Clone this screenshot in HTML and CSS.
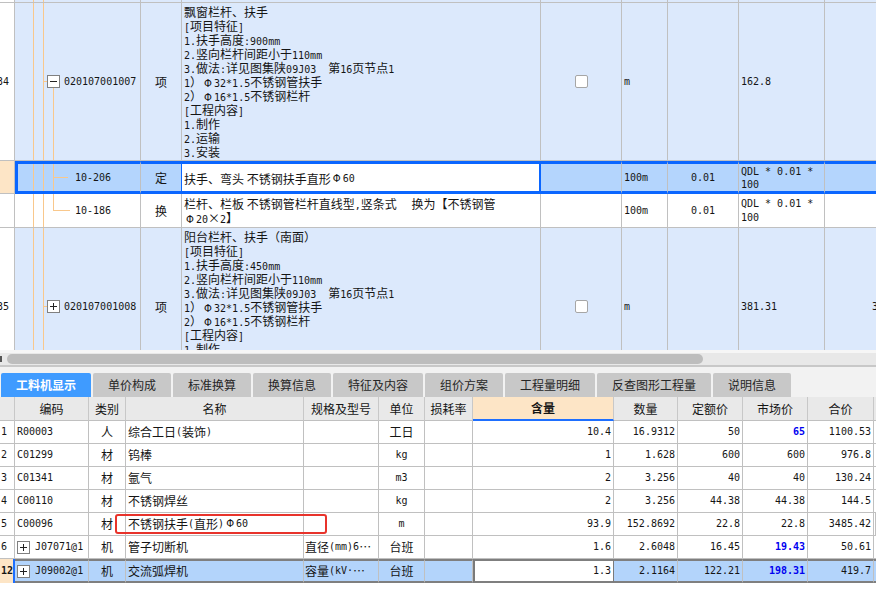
FILE: index.html
```html
<!DOCTYPE html>
<html lang="zh-CN">
<head>
<meta charset="utf-8">
<title>工料机显示</title>
<link rel="stylesheet" href="styles.css">
</head>
<body>
<div class="top">
  <div class="trow blue tail">
    <div class="rn"></div><div class="code"></div><div></div><div></div><div></div><div></div><div></div><div></div><div></div>
  </div>

  <div class="trow blue item">
    <div class="rn m">134</div>
    <div class="code t-open"><svg class="box" width="13" height="13" viewBox="0 0 13 13"><rect x=".5" y=".5" width="12" height="12" fill="#fff" stroke="#808080"/><path d="M3 6.5H10" stroke="#222"/></svg><span class="m">020107001007</span></div>
    <div class="type">项</div>
    <div class="name">飘窗栏杆、扶手<br><span class="m">[</span>项目特征<span class="m">]</span><br><span class="m">1.</span>扶手高度<span class="m">:900mm</span><br><span class="m">2.</span>竖向栏杆间距小于<span class="m">110mm</span><br><span class="m">3.</span>做法<span class="m">:</span>详见图集陕<span class="m">09J03</span>　第<span class="m">16</span>页节点<span class="m">1</span><br><span class="m">1</span>）<span class="phi">Φ</span><span class="m">32*1.5</span>不锈钢管扶手<br><span class="m">2</span>）<span class="phi">Φ</span><span class="m">16*1.5</span>不锈钢栏杆<br><span class="m">[</span>工程内容<span class="m">]</span><br><span class="m">1.</span>制作<br><span class="m">2.</span>运输<br><span class="m">3.</span>安装</div>
    <div class="chk"><span class="cb"></span></div>
    <div class="unit m">m</div>
    <div class="qty m"></div>
    <div class="expr m">162.8</div>
    <div class="lastc"></div>
  </div>

  <div class="trow sel">
    <div class="rn"></div>
    <div class="code t-mid"><span class="m">10-206</span></div>
    <div class="type">定</div>
    <div class="name one">扶手、弯头 不锈钢扶手直形<span class="phi">Φ</span><span class="m">60</span></div>
    <div class="chk"></div>
    <div class="unit m">100m</div>
    <div class="qty m">0.01</div>
    <div class="expr m">QDL * 0.01 *<br>100</div>
    <div class="lastc"></div>
  </div>

  <div class="trow plain">
    <div class="rn"></div>
    <div class="code t-last"><span class="m">10-186</span></div>
    <div class="type">换</div>
    <div class="name">栏杆、栏板 不锈钢管栏杆直线型<span class="m">,</span>竖条式　 换为【不锈钢管<br><span class="phi">Φ</span><span class="m">20</span>×<span class="m">2</span>】</div>
    <div class="chk"></div>
    <div class="unit m">100m</div>
    <div class="qty m">0.01</div>
    <div class="expr m">QDL * 0.01 *<br>100</div>
    <div class="lastc"></div>
  </div>

  <div class="trow blue item">
    <div class="rn m">135</div>
    <div class="code t-closed"><svg class="box" width="13" height="13" viewBox="0 0 13 13"><rect x=".5" y=".5" width="12" height="12" fill="#fff" stroke="#808080"/><path d="M3 6.5H10M6.5 3V10" stroke="#222"/></svg><span class="m">020107001008</span></div>
    <div class="type">项</div>
    <div class="name">阳台栏杆、扶手（南面）<br><span class="m">[</span>项目特征<span class="m">]</span><br><span class="m">1.</span>扶手高度<span class="m">:450mm</span><br><span class="m">2.</span>竖向栏杆间距小于<span class="m">110mm</span><br><span class="m">3.</span>做法<span class="m">:</span>详见图集陕<span class="m">09J03</span>　第<span class="m">16</span>页节点<span class="m">1</span><br><span class="m">1</span>）<span class="phi">Φ</span><span class="m">32*1.5</span>不锈钢管扶手<br><span class="m">2</span>）<span class="phi">Φ</span><span class="m">16*1.5</span>不锈钢栏杆<br><span class="m">[</span>工程内容<span class="m">]</span><br><span class="m">1.</span>制作<br><span class="m">2.</span>运输<br><span class="m">3.</span>安装</div>
    <div class="chk"><span class="cb"></span></div>
    <div class="unit m">m</div>
    <div class="qty m"></div>
    <div class="expr m">381.31</div>
    <div class="lastc m">381.31</div>
  </div>
</div>

<div class="hscroll"><span class="arrow"></span><span class="thumb"></span></div>

<div class="tabbar">
  <div class="tab active w90">工料机显示</div>
  <div class="tab w78">单价构成</div>
  <div class="tab w78">标准换算</div>
  <div class="tab w78">换算信息</div>
  <div class="tab w90">特征及内容</div>
  <div class="tab w78">组价方案</div>
  <div class="tab w90">工程量明细</div>
  <div class="tab w114">反查图形工程量</div>
  <div class="tab w78">说明信息</div>
</div>

<div class="btable">
  <div class="brow head">
    <div></div><div>编码</div><div>类别</div><div>名称</div><div>规格及型号</div><div>单位</div><div>损耗率</div><div class="hl">含量</div><div>数量</div><div>定额价</div><div>市场价</div><div>合价</div><div></div>
  </div>

  <div class="brow">
    <div class="rn m">1</div><div class="cd m">R00003</div><div class="ty">人</div><div class="nm">综合工日<span class="m">(</span>装饰<span class="m">)</span></div><div class="sp"></div><div class="un">工日</div><div></div><div class="r m">10.4</div><div class="r m">16.9312</div><div class="r m">50</div><div class="r m hot">65</div><div class="r m">1100.53</div><div></div>
  </div>
  <div class="brow">
    <div class="rn m">2</div><div class="cd m">C01299</div><div class="ty">材</div><div class="nm">钨棒</div><div class="sp"></div><div class="un m">kg</div><div></div><div class="r m">1</div><div class="r m">1.628</div><div class="r m">600</div><div class="r m">600</div><div class="r m">976.8</div><div></div>
  </div>
  <div class="brow">
    <div class="rn m">3</div><div class="cd m">C01341</div><div class="ty">材</div><div class="nm">氩气</div><div class="sp"></div><div class="un m">m3</div><div></div><div class="r m">2</div><div class="r m">3.256</div><div class="r m">40</div><div class="r m">40</div><div class="r m">130.24</div><div></div>
  </div>
  <div class="brow">
    <div class="rn m">4</div><div class="cd m">C00110</div><div class="ty">材</div><div class="nm">不锈钢焊丝</div><div class="sp"></div><div class="un m">kg</div><div></div><div class="r m">2</div><div class="r m">3.256</div><div class="r m">44.38</div><div class="r m">44.38</div><div class="r m">144.5</div><div></div>
  </div>
  <div class="brow marked">
    <div class="rn m">5</div><div class="cd m">C00096</div><div class="ty">材</div><div class="nm">不锈钢扶手<span class="m">(</span>直形<span class="m">) </span><span class="phi">Φ</span><span class="m">60</span></div><div class="sp"></div><div class="un m">m</div><div></div><div class="r m">93.9</div><div class="r m">152.8692</div><div class="r m">22.8</div><div class="r m">22.8</div><div class="r m">3485.42</div><div></div>
    <span class="mark"></span>
  </div>
  <div class="brow">
    <div class="rn m">6</div><div class="cd"><svg class="box" width="13" height="13" viewBox="0 0 13 13"><rect x=".5" y=".5" width="12" height="12" fill="#fff" stroke="#808080"/><path d="M3 6.5H10M6.5 3V10" stroke="#222"/></svg><span class="m">J07071@1</span></div><div class="ty">机</div><div class="nm">管子切断机</div><div class="sp">直径<span class="m">(mm)6</span>…</div><div class="un">台班</div><div></div><div class="r m">1.6</div><div class="r m">2.6048</div><div class="r m">16.45</div><div class="r m hot">19.43</div><div class="r m">50.61</div><div></div>
  </div>
  <div class="brow bsel">
    <div class="rn m">12</div><div class="cd"><svg class="box" width="13" height="13" viewBox="0 0 13 13"><rect x=".5" y=".5" width="12" height="12" fill="#fff" stroke="#808080"/><path d="M3 6.5H10M6.5 3V10" stroke="#222"/></svg><span class="m">J09002@1</span></div><div class="ty">机</div><div class="nm">交流弧焊机</div><div class="sp">容量<span class="m">(kV·</span>…</div><div class="un">台班</div><div></div><div class="r m edit">1.3</div><div class="r m">2.1164</div><div class="r m">122.21</div><div class="r m hot">198.31</div><div class="r m">419.7</div><div></div>
  </div>
</div>
</body>
</html>
```

FILE: styles.css
```css
* { box-sizing: border-box; margin: 0; padding: 0; }

body {
  margin: 0;
  width: 876px;
  height: 592px;
  overflow: hidden;
  background: #fff;
  color: #151515;
  font: 12px/14px "Noto Sans CJK SC", sans-serif;
}

.m { font-family: "DejaVu Sans Mono", monospace; font-size: 10px; }
.phi {
  display: inline-block;
  width: 12px;
  text-align: center;
  font-family: "DejaVu Sans", sans-serif;
  font-size: 10px;
}
.name .m, .name .phi, .nm .m, .nm .phi, .sp .m { line-height: 1; }

/* ---------- upper grid ---------- */
.top { height: 350px; overflow: hidden; }

.trow {
  --o: linear-gradient(#f9c88c, #f9c88c);
  display: grid;
  grid-template-columns: 15px 126px 41px 359px 81px 46px 71px 86px 51px;
}
.trow > div {
  border-right: 1px solid #c0c0c0;
  border-bottom: 1px solid #c0c0c0;
  overflow: hidden;
  white-space: nowrap;
  display: flex;
  align-items: center;
}
.trow > div:last-child { border-right: 0; }

.tail { height: 3px; }
.item { height: 158px; }
.sel { height: 33px; }
.plain { height: 34px; }

.blue > div { background-color: #dce9fc; }
.blue > .rn { background-color: #fff; }

.rn { justify-content: flex-end; padding-right: 5px; }

.code { background-repeat: no-repeat; }
.tail .code,
.t-open, .t-closed, .t-last {
  background-image: var(--o), var(--o);
  background-position: 18px 0, 28px 0;
  background-size: 1px 100%, 1px 100%;
}
.t-open {
  padding-left: 32px;
  background-image: var(--o), var(--o), var(--o), var(--o);
  background-position: 18px 0, 28px 0, 28px 50%, 38px 100%;
  background-size: 1px 100%, 1px 100%, 5px 1px, 1px 50%;
}
.t-closed {
  padding-left: 32px;
  background-image: var(--o), var(--o), var(--o);
  background-position: 18px 0, 28px 0, 28px 50%;
  background-size: 1px 100%, 1px 100%, 5px 1px;
}
.t-mid {
  padding-left: 57px;
  background-image: var(--o), var(--o), var(--o), var(--o);
  background-position: 15px 0, 25px 0, 35px 0, 35px 50%;
  background-size: 1px 100%, 1px 100%, 1px 100%, 15px 1px;
}
.t-last {
  padding-left: 60px;
  background-image: var(--o), var(--o), var(--o), var(--o);
  background-position: 18px 0, 28px 0, 38px 0, 38px 50%;
  background-size: 1px 100%, 1px 100%, 1px 50%, 17px 1px;
}
.box { flex: none; display: block; margin-right: 4px; }

.type { justify-content: center; }

.trow > .name {
  display: block;
  padding: 2px 0 0 2px;
  line-height: 14px;
}
.plain > .name { padding-top: 3px; }
.trow > .name.one { display: flex; align-items: center; }

.chk { justify-content: center; }
.cb {
  width: 13px;
  height: 13px;
  background: #fff;
  border: 1px solid #a6a6a6;
  border-radius: 2px;
}

.unit { padding-left: 2px; }
.qty { justify-content: center; }
.expr { padding-left: 2px; line-height: 13px; }
.plain .expr { line-height: 14px; }
.lastc { padding-left: 47px; }

/* selected upper row */
.sel > div {
  background-color: #b4d5fd;
  border-top: 3px solid #0a66ff;
  border-bottom: 3px solid #0a66ff;
}
.sel > .chk { background-color: #b4d5fd; }
.sel > .rn {
  background-color: #fde5c6;
  border-top: 0;
  border-bottom: 1px solid #c0c0c0;
}
.sel > .code { border-left: 3px solid #0a66ff; }
.sel > .type { border-right-color: #0a66ff; }
.sel > .name {
  background-color: #fff;
  border-right: 2px solid #0a66ff;
  padding-left: 2px;
}

/* ---------- horizontal scrollbar ---------- */
.hscroll {
  height: 17px;
  display: flex;
  align-items: center;
  gap: 5px;
  background: #e8e8e8;
  border-top: 3px solid #f6f6f6;
  border-bottom: 2px solid #c8c8c8;
}
.arrow { width: 2px; height: 6px; background: #555; }
.thumb {
  width: 696px;
  height: 10px;
  border-radius: 5px;
  background: #bdbdbd;
}

/* ---------- tabs ---------- */
.tabbar {
  height: 30px;
  display: flex;
  gap: 2px;
  padding: 6px 0 0 1px;
  background: #f2f2f2;
}
.tab {
  height: 24px;
  display: flex;
  align-items: center;
  justify-content: center;
  background: #c8c8c8;
  color: #262626;
  border-radius: 2px 2px 0 0;
}
.tab.active { background: #3f9bff; color: #fff; font-weight: 700; }
.w78 { width: 78px; }
.w90 { width: 90px; }
.w114 { width: 114px; }

/* ---------- lower grid ---------- */
.brow {
  display: grid;
  grid-template-columns: 15px 74px 37px 178px 75px 46px 48px 141px 64px 65px 65px 66px 2px;
  height: 23px;
}
.brow > div {
  border-right: 1px solid #c0c0c0;
  border-bottom: 1px solid #c0c0c0;
  display: flex;
  align-items: center;
  white-space: nowrap;
  overflow: hidden;
}
.brow > div:last-child { border-right: 0; }

.head { height: 24px; }
.head > div {
  background: #e9e9e9;
  justify-content: center;
  border-right-color: #c8c8c8;
}
.head > .hl {
  background: #fde5c6;
  font-weight: 700;
  border-bottom: 2px solid #1e6fff;
}

.brow > .rn { justify-content: flex-start; padding: 0 0 0 1px; }
.cd { padding-left: 2px; }
.cd .box { margin-right: 5px; }
.ty, .un { justify-content: center; }
.nm { padding-left: 2px; }
.sp { padding-left: 1px; }
.r { justify-content: flex-end; padding-right: 2px; }
.hot { color: #0000f0; font-weight: 700; }

.marked { position: relative; }
.mark {
  position: absolute;
  left: 115px;
  top: 1px;
  width: 212px;
  height: 20px;
  border: 2px solid #e8332b;
  border-radius: 3px;
}

.bsel { height: 24px; }
.bsel > div {
  background: #b3d4fb;
  border-top: 2px solid #7f7f7f;
  border-bottom: 2px solid #7f7f7f;
}
.bsel > .rn {
  background: #fde5c6;
  font-weight: 700;
  border-top: 0;
  border-bottom: 0;
  border-right: 2px solid #1e6fff;
}
.bsel > .edit {
  background: #fff;
  border-left: 2px solid #7a7a7a;
  border-right: 1px solid #7a7a7a;
}
```
